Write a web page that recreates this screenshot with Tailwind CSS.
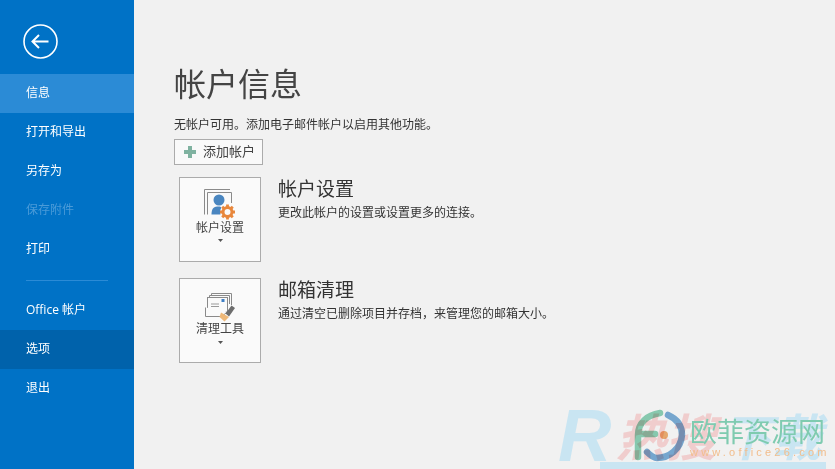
<!DOCTYPE html>
<html lang="zh-CN">
<head>
    <meta charset="UTF-8">
    <title>帐户信息</title>
    <script src="https://cdn.jsdelivr.net/npm/@tailwindcss/browser@4"></script>
</head>
<body class="relative w-[835px] h-[469px] overflow-hidden bg-[#f1f1f1] flex font-['Noto_Sans_CJK_SC','Noto_Sans',sans-serif] text-[#444444]">
    <!-- sidebar -->
    <aside class="w-[134px] h-full shrink-0 bg-[#0072c6] text-white text-[12px] flex flex-col">
        <div class="h-[74px] pl-[23px] pt-[24px]">
            <svg width="35" height="35" viewBox="0 0 35 35" fill="none" stroke="#fff">
                <circle cx="17.5" cy="17.5" r="16.5" stroke-width="1.6"/>
                <path d="M9.5 17.5H25.5M16 11L9.5 17.5L16 24" stroke-width="2"/>
            </svg>
        </div>
        <a class="h-[39px] pl-[26px] pb-[4px] flex items-center bg-[#2b8bd6]">信息</a>
        <a class="h-[39px] pl-[26px] pb-[4px] flex items-center">打开和导出</a>
        <a class="h-[38px] pl-[26px] pb-[2px] flex items-center">另存为</a>
        <a class="h-[39px] pl-[26px] pb-[2px] flex items-center text-[#4a9bd8]">保存附件</a>
        <a class="h-[39px] pl-[26px] pb-[2px] flex items-center">打印</a>
        <div class="mt-[12px] mb-[9px] ml-[26px] w-[82px] h-px bg-[#2b8bd6]"></div>
        <a class="h-[40px] pl-[26px] flex items-center font-['Open_Sans','Noto_Sans_CJK_SC',sans-serif]">Office 帐户</a>
        <a class="h-[39px] pl-[26px] pb-[4px] flex items-center bg-[#0062ab]">选项</a>
        <a class="h-[39px] pl-[26px] pb-[4px] flex items-center">退出</a>
    </aside>

    <!-- main -->
    <main class="flex-1 pl-[40px] pt-[61px]">
        <h1 class="text-[32px] leading-[42px] font-normal">帐户信息</h1>
        <p class="mt-[11px] text-[12px] leading-[20px] text-[#333333]">无帐户可用。添加电子邮件帐户以启用其他功能。</p>
        <button class="mt-[5px] w-[89px] h-[26px] pb-[2px] flex items-center bg-white/60 border border-[#ababab] text-[13px] pl-[9px] text-[#444444]">
            <svg class="mt-[2px]" width="12" height="12" viewBox="0 0 12 12" fill="#7fb2a0"><path d="M4 0H8V4H12V8H8V12H4V8H0V4H4Z"/></svg>
            <span class="ml-[7px]">添加帐户</span>
        </button>

        <section class="mt-[12px] ml-[5px] flex">
            <div class="w-[82px] h-[85px] bg-[#fafafa] border border-[#ababab] flex flex-col items-center pt-[11px]">
                <svg width="32" height="31" viewBox="0 0 32 31" fill="none">
                    <path d="M0.5 25.5V0.5H26" stroke="#8a8a8a"/>
                    <path d="M3.5 25.5V3.5H27.5V14" stroke="#8a8a8a"/>
                    <circle cx="15" cy="11" r="5.5" fill="#4a86c0"/>
                    <path d="M7.5 25.5C7.5 19 10 17.5 15 17.5C17 17.5 18 18 18 25.5Z" fill="#4a86c0"/>
                    <circle cx="23.5" cy="23" r="7.5" fill="#fafafa"/>
                    <g fill="none" stroke="#e8873c">
                        <circle cx="23.5" cy="23" r="4.5" stroke-width="3"/>
                        <path d="M23.5 15.5V30.5M16 23H31M18.2 17.7L28.8 28.3M28.8 17.7L18.2 28.3" stroke-width="2.8"  stroke-dasharray="2.6 9.8"/>
                    </g>
                </svg>
                <span class="text-[12px] leading-[18px] -mt-[2px]">帐户设置</span>
                <svg class="mt-[3px]" width="5" height="3" viewBox="0 0 5 3" fill="#555"><path d="M0 0H5L2.5 3Z"/></svg>
            </div>
            <div class="ml-[17px] -mt-[1px]">
                <h2 class="text-[19px] leading-[24px] font-normal text-[#333333]">帐户设置</h2>
                <p class="mt-[3px] text-[12px] leading-[18px] text-[#333333]">更改此帐户的设置或设置更多的连接。</p>
            </div>
        </section>

        <section class="mt-[16px] ml-[5px] flex">
            <div class="w-[82px] h-[85px] bg-[#fafafa] border border-[#ababab] flex flex-col items-center pt-[14px]">
                <svg width="31" height="29" viewBox="0 0 31 29" fill="none">
                    <path d="M6.5 2.5V0.5H26.5V12" stroke="#8a8a8a"/>
                    <path d="M4.5 4.5V2.5H24.5V11" stroke="#8a8a8a"/>
                    <rect x="2.5" y="4.5" width="20" height="14" fill="#fafafa" stroke="#8a8a8a"/>
                    <rect x="16.5" y="6" width="3" height="3" fill="#3f7fc4"/>
                    <path d="M6 11H14M6 13.5H14" stroke="#9a9a9a"/>
                    <path d="M0.5 14.5V23.5H17L22.5 18.5" fill="#fafafa" stroke="#8a8a8a"/>
                    <path d="M16 19.5L24 24L19.5 28.5L14.5 24Z" fill="#eeb878"/>
                    <path d="M20.5 20.5L26.5 12.5L30 15L24 23.5Z" fill="#6d6d6d"/>
                </svg>
                <span class="text-[12px] leading-[18px] -mt-[3px]">清理工具</span>
                <svg class="mt-[4px]" width="5" height="3" viewBox="0 0 5 3" fill="#555"><path d="M0 0H5L2.5 3Z"/></svg>
            </div>
            <div class="ml-[17px] -mt-[1px]">
                <h2 class="text-[19px] leading-[24px] font-normal text-[#333333]">邮箱清理</h2>
                <p class="mt-[3px] text-[12px] leading-[18px] text-[#333333]">通过清空已删除项目并存档，来管理您的邮箱大小。</p>
            </div>
        </section>
    </main>

    <!-- watermark -->
    <div class="absolute left-[558px] top-[400px] w-[277px] h-[69px] overflow-hidden italic font-bold leading-none whitespace-nowrap">
        <span class="absolute left-[0px] top-[3px] text-[74px] leading-[66px] text-[#c9e5f2] font-['Liberation_Sans',sans-serif]">R</span>
        <span class="absolute left-[58px] top-[9px] text-[50px] leading-[50px] text-[#f0cdcd]">热搜</span>
        <span class="absolute left-[164px] top-[9px] text-[50px] leading-[50px] text-[#c9e5f2]">下载</span>
        <div class="absolute left-[42px] top-[62px] w-[226px] h-[7px] bg-[#c9e5f2]"></div>
    </div>
    <div class="absolute left-[632px] top-[408px] mix-blend-multiply">
        <svg width="56" height="56" viewBox="0 0 56 56" fill="none" stroke-width="6.5" stroke-linecap="round">
            <path d="M6 49V27C6 15 15 7 28 5" stroke="#8fd4b8"/>
            <path d="M8 26H23" stroke="#8fd4b8"/>
            <path d="M36 7C45 11 50 18 50 27C49 41 37 50 25 50C21 50 18 47 15 44" stroke="#7db0da"/>
            <circle cx="32" cy="27" r="4" fill="#f2b173" stroke="none"/>
        </svg>
    </div>
    <div class="absolute left-[690px] top-[415px] w-[140px]">
        <div class="text-[27px] leading-[31px] text-[#7fcbb0] whitespace-nowrap">欧菲资源网</div>
        <div class="text-[11px] leading-[13px] tracking-[3.2px] text-[#f2bd8c] whitespace-nowrap font-['Liberation_Sans',sans-serif]">www.office26.com</div>
    </div>
</body>
</html>
